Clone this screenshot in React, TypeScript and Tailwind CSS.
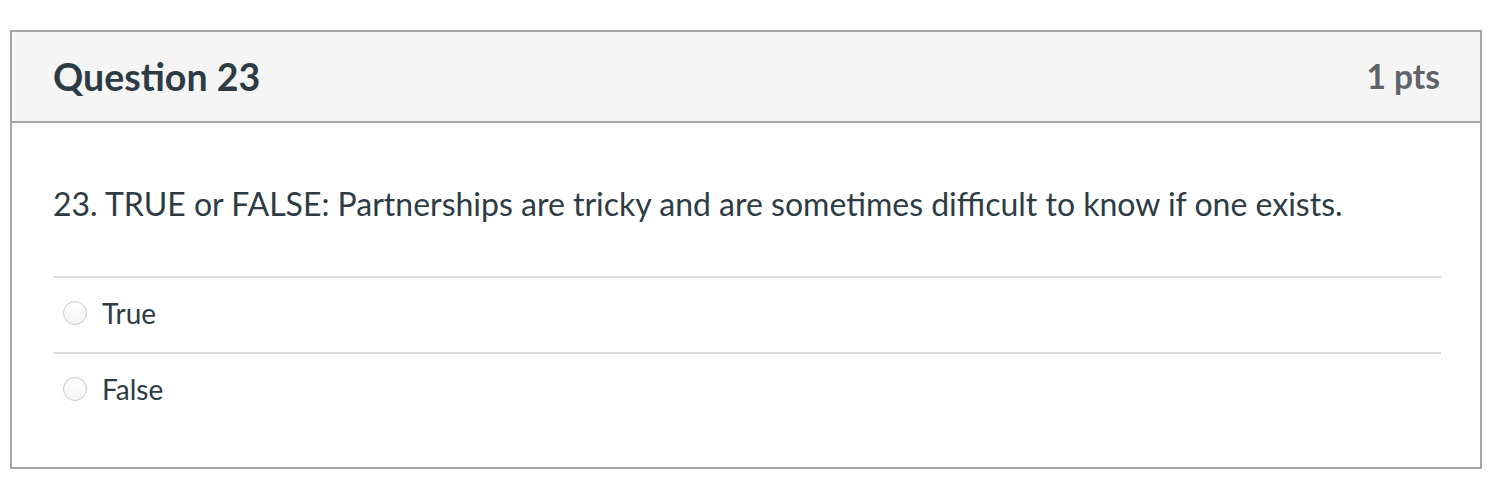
const answers = ["True", "False"];

const Radio: React.FC = () => (
  <span className="inline-block w-[24px] h-[24px] rounded-full border border-[#c8c8c8] bg-gradient-to-b from-[#ffffff] to-[#f4f4f4]" />
);

export default function App() {
  return (
    <div className="w-[1502px] h-[492px] bg-white pt-[30px] pl-[10px] font-['Lato','Noto_Sans',sans-serif] text-[#2d3b45]">
      <div className="w-[1472px] h-[439px] border-2 border-[#a5a5a5] flex flex-col">
        <div className="h-[91px] shrink-0 bg-[#f5f5f5] border-b-2 border-[#a5a5a5] flex items-center justify-between pl-[41px] pr-[40px]">
          <h2 className="text-[37.5px] font-bold leading-none">Question 23</h2>
          <span className="text-[33.5px] font-bold text-[#5f6469] leading-none">1 pts</span>
        </div>
        <div className="pl-[41px] pr-[39px] pt-[64px]">
          <p className="text-[32px] leading-[34px]">
            23. TRUE or FALSE: Partnerships are tricky and are sometimes difficult to know if one exists.
          </p>
          <div className="mt-[55px]">
            {answers.map((a) => (
              <div key={a} className="h-[76px] border-t-2 border-[#dcdcdc] flex items-center pl-[10px] gap-[15px] pb-[4px]">
                <Radio />
                <span className="text-[28px]">{a}</span>
              </div>
            ))}
          </div>
        </div>
      </div>
    </div>
  );
}
